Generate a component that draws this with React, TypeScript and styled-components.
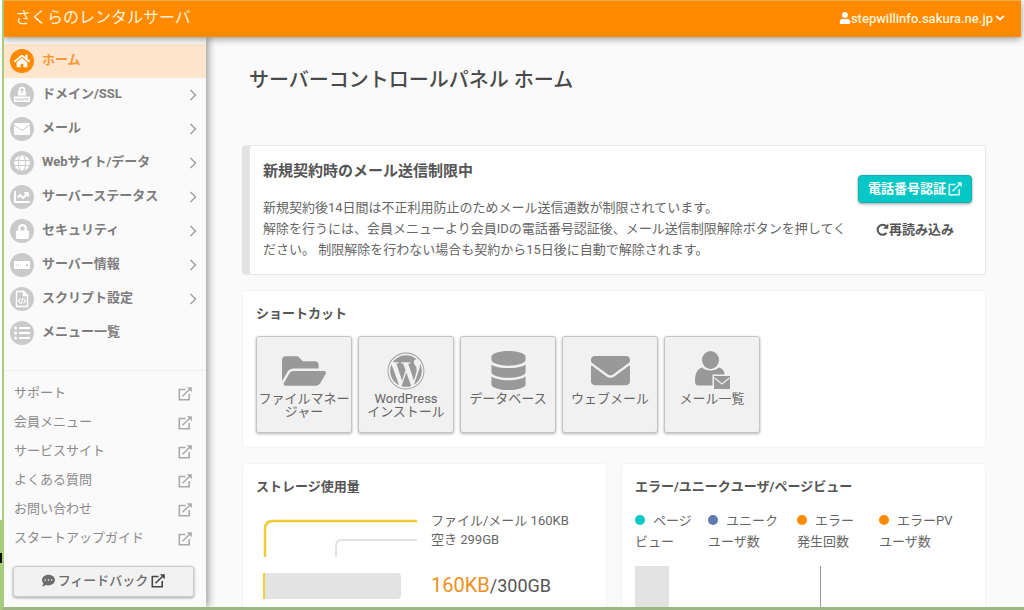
import React from 'react';
import styled, { createGlobalStyle } from 'styled-components';
import {
  FaChartLine, FaChevronDown, FaCommentDots, FaDatabase, FaEnvelope, FaFolderOpen,
  FaGlobe, FaHome, FaListUl, FaLock, FaUser, FaWordpress,
} from 'react-icons/fa';

const Global = createGlobalStyle`
  * { box-sizing: border-box; }
  body {
    margin: 0;
    background: linear-gradient(#fff 520px, #a5cd7c 520px 553px, #111 553px 563px, #a5cd7c 563px);
    color: #555;
    font: 13px/21px Roboto, "Noto Sans CJK JP", sans-serif;
  }
  h1, h2, p, ul { margin: 0; padding: 0; }
  ul { list-style: none; }
  a { color: inherit; text-decoration: none; }
  button { font: inherit; color: inherit; cursor: pointer; }
  svg { display: block; flex: none; }
`;

const Frame = styled.div`
  position: relative;
  height: 100vh;
  overflow: hidden;
  display: flex;
  flex-direction: column;
  background: #fafafa;
  border: solid #a5cd7c;
  border-width: 0 0 3px 2px;
  border-bottom-color: #9db683;
  margin-left: 2px;
`;

const Header = styled.header`
  position: relative;
  z-index: 2;
  flex: none;
  height: 37px;
  margin-right: 3px;
  padding: 0 16px 0 11px;
  border-top: 1px solid #f0a850;
  display: flex;
  align-items: center;
  justify-content: space-between;
  background: #ff8a00;
  color: #fff1d6;
  box-shadow: 0 2px 7px rgba(0, 0, 0, 0.4);
`;

const Brand = styled.a`
  font-size: 16px;
  line-height: 24px;
  padding-bottom: 2px;
`;

const Account = styled.button`
  display: flex;
  align-items: center;
  padding: 0 0 2px;
  border: 0;
  background: none;
  font-weight: 500;
  svg { fill: #fff; }
  svg:last-child { margin-left: 2px; }
`;

const Body = styled.div`
  flex: 1;
  min-height: 0;
  display: flex;
`;

const Sidebar = styled.aside`
  position: relative;
  z-index: 1;
  flex: none;
  width: 202px;
  padding-top: 7px;
  background: #fafafa;
  box-shadow: 2px 0 8px rgba(0, 0, 0, 0.42);
`;

const MenuItem = styled.a<{ $active?: boolean }>`
  display: flex;
  align-items: center;
  gap: 8px;
  height: 34px;
  padding: 0 9px 0 6px;
  font-weight: 700;
  color: ${p => (p.$active ? '#f5993a' : '#7c7c7c')};
  background: ${p => (p.$active ? '#ffe5cc' : 'transparent')};
`;

const MenuIcon = styled.span<{ $active?: boolean }>`
  flex: none;
  width: 24px;
  height: 24px;
  border-radius: 50%;
  display: grid;
  place-items: center;
  color: #fff;
  background: ${p => (p.$active ? '#ff8a00' : '#cacaca')};
`;

const MenuLabel = styled.span`
  flex: 1;
  padding-bottom: 3px;
`;

const LinkList = styled.ul`
  margin-top: 20px;
  padding: 8px 14px 0 10px;
  border-top: 1px solid #eee;
`;

const SideLink = styled.a`
  display: flex;
  align-items: center;
  justify-content: space-between;
  height: 29px;
  color: #8a8a8a;
  span { padding-bottom: 3px; }
  svg { color: #aaa; }
`;

const Feedback = styled.button`
  display: flex;
  align-items: center;
  justify-content: center;
  gap: 3px;
  width: 181px;
  height: 31px;
  margin: 13px 0 0 9px;
  padding: 0 0 2px;
  border: 1px solid #ccc;
  border-radius: 3px;
  background: #f2f2f2;
  box-shadow: 0 1px 3px rgba(0, 0, 0, 0.35);
  font-weight: 500;
  color: #6c6c6c;
  svg:last-child { color: #444; }
`;

const Main = styled.main`
  flex: 1;
  min-width: 0;
  padding: 28px 38px 0 36px;
  display: flex;
  flex-direction: column;
  gap: 15px;
`;

const Title = styled.h1`
  padding-left: 7px;
  margin-bottom: 34px;
  font-size: 20px;
  line-height: 31px;
  font-weight: 500;
  color: #4a4a4a;
`;

const Card = styled.section`
  padding: 13px 13px 14px;
  background: #fff;
  border: 1px solid #f3f3f3;
  border-radius: 4px;
`;

const CardTitle = styled.h2`
  font-size: 13px;
  line-height: 20px;
  font-weight: 700;
  color: #555;
`;

const Notice = styled(Card)`
  display: flex;
  align-items: center;
  gap: 6px;
  padding: 14px 13px;
  border-color: #e8e8e8;
  border-left: 8px solid #e3e3e3;
`;

const NoticeText = styled.div`
  flex: 1;
  min-width: 0;
  color: #666;
`;

const NoticeTitle = styled.h2`
  margin-bottom: 15px;
  font-size: 15px;
  line-height: 22px;
  font-weight: 700;
  color: #555;
`;

const NoticeActions = styled.div`
  flex: none;
  display: flex;
  flex-direction: column;
  align-items: center;
  gap: 16px;
  padding-bottom: 6px;
`;

const Primary = styled.a`
  display: flex;
  align-items: center;
  gap: 2px;
  height: 28px;
  padding: 0 9px;
  border: 1px solid #0ab2b2;
  border-radius: 4px;
  background: #05c7c5;
  box-shadow: 0 1px 3px rgba(0, 0, 0, 0.4);
  color: #fff;
  font-weight: 700;
  svg { color: #d9ffff; }
`;

const Reload = styled.button`
  display: flex;
  align-items: center;
  padding: 0;
  border: 0;
  background: none;
  font-weight: 700;
`;

const Tiles = styled.div`
  display: flex;
  gap: 6px;
  margin-top: 12px;
`;

const Tile = styled.a`
  display: flex;
  flex-direction: column;
  align-items: center;
  width: 96px;
  height: 97px;
  padding-top: 12px;
  border: 1px solid #c4c4c4;
  border-radius: 3px;
  background: #f1f1f1;
  box-shadow: 0 1px 3px rgba(0, 0, 0, 0.3);
  color: #666;
  line-height: 13px;
  text-align: center;
`;

const TileIcon = styled.span`
  display: grid;
  place-items: center;
  height: 43px;
  color: #999;
`;

const TileLabel = styled.span`
  display: flex;
  flex-direction: column;
  align-items: center;
`;

const Columns = styled.div`
  display: grid;
  grid-template-columns: 1fr 1fr;
  gap: 14px;
`;

const Storage = styled.div`
  display: grid;
  grid-template-columns: 161px 1fr;
  column-gap: 14px;
  row-gap: 15px;
  align-items: center;
  margin-top: 12px;
  padding-bottom: 30px;
`;

const StorageLegend = styled.p`
  align-self: start;
  padding-top: 2px;
  line-height: 19px;
  color: #666;
`;

const Meter = styled.div`
  width: 138px;
  height: 26px;
  margin-left: 7px;
  border-left: 2px solid #f0cf3c;
  border-radius: 0 4px 4px 0;
  background: #e3e3e3;
`;

const Amount = styled.p`
  font-size: 18px;
  line-height: 26px;
  strong {
    font-size: 20px;
    font-weight: 400;
    color: #f09022;
  }
`;

const Legend = styled.ul`
  display: flex;
  margin-top: 13px;
  color: #666;
`;

const LegendItem = styled.li<{ $color: string; $width: number }>`
  width: ${p => p.$width}px;
  &::before {
    content: '';
    display: inline-block;
    width: 10px;
    height: 10px;
    margin-right: 8px;
    border-radius: 50%;
    background: ${p => p.$color};
  }
`;

const Chart = styled.svg`
  width: 100%;
  height: 60px;
  margin-top: 14px;
`;

const External = () => (
  <svg width="14" height="14" viewBox="0 0 14 14" fill="none" stroke="currentColor" strokeWidth="1.6">
    <path d="M7.5 2.5H1.3v10.200h9.900V7M4.500 9.300 12 2" />
    <path d="M8.800.3h5v5z" fill="currentColor" stroke="none" />
  </svg>
);

const Chevron = () => (
  <svg width="8" height="12" viewBox="0 0 8 12" fill="none" stroke="#a2a2a2" strokeWidth="1.500">
    <path d="M1.500 1 6.500 6l-5 5" />
  </svg>
);

const ReloadIcon = () => (
  <svg width="13" height="13" viewBox="0 0 13 13" fill="none" stroke="currentColor" strokeWidth="2">
    <path d="M10.300 3.300A5 5 0 1 0 10.500 10" />
    <path d="M12.300.6v5.200H7.100z" fill="currentColor" stroke="none" />
  </svg>
);

const DomainIcon = () => (
  <svg width="18" height="18" viewBox="0 0 18 18">
    <path d="M6.500 6V4a2.500 2.500 0 0 1 5 0v2" fill="none" stroke="#fff" strokeWidth="1.500" />
    <path d="M5 4.800h8v4.700H5zM1 10.500h16V16H1z" fill="#fff" />
    <circle cx="9" cy="6" r="1" fill="#cacaca" />
    <path d="M2.500 12l1 2.500 1-2 1 2 1-2.500M7 12l1 2.500 1-2 1 2 1-2.500M11.500 12l1 2.500 1-2 1 2 1-2.500" fill="none" stroke="#cacaca" strokeWidth=".8" />
  </svg>
);

const MailIcon = () => (
  <svg width="18" height="14" viewBox="0 0 18 14">
    <rect x="1" y="1" width="16" height="12" rx="1.500" fill="#fff" />
    <path d="M1 3l8 5.500L17 3" fill="none" stroke="#cacaca" />
  </svg>
);

const ServerIcon = () => (
  <svg width="18" height="10" viewBox="0 0 18 10">
    <rect x="1" y="1" width="16" height="8" fill="#fff" />
    <path d="M3.500 4v2M5.500 4v2M7.500 4v2" stroke="#e4e4e4" />
    <circle cx="14" cy="5" r=".9" fill="#bbb" />
  </svg>
);

const ScriptIcon = () => (
  <svg width="14" height="18" viewBox="0 0 14 18" fill="none" stroke="#fff" strokeWidth="1.400">
    <path d="M1.500 1.500h7l4 4v11h-11z" />
    <path d="M8.500 1.500v4h4z" fill="#fff" />
    <path d="M5.500 8.500 3.500 11l2 2.500M8.500 8.500l2 2.500-2 2.500M7.600 8 6.400 14" strokeWidth="1.200" />
  </svg>
);

const UserMailIcon = () => (
  <svg width="37" height="39" viewBox="0 0 37 39" fill="#999">
    <ellipse cx="16.500" cy="9" rx="8.500" ry="9" />
    <path d="M8 16.500c4 4 13 4 17 0 3.500 1 5.300 3.500 5.700 7H18.500v11H4.500C2 34.500 1 33 1 30c0-7 2-12 7-13.500z" />
    <rect x="20" y="25" width="16" height="13" />
    <path d="M20.500 27 28 33l7.500-6" fill="none" stroke="#f1f1f1" strokeWidth="1.200" />
  </svg>
);

const menu = [
  { label: 'ホーム', icon: <FaHome size={16} />, active: true },
  { label: 'ドメイン/SSL', icon: <DomainIcon />, sub: true },
  { label: 'メール', icon: <MailIcon />, sub: true },
  { label: 'Webサイト/データ', icon: <FaGlobe size={16} />, sub: true },
  { label: 'サーバーステータス', icon: <FaChartLine size={16} />, sub: true },
  { label: 'セキュリティ', icon: <FaLock size={15} />, sub: true },
  { label: 'サーバー情報', icon: <ServerIcon />, sub: true },
  { label: 'スクリプト設定', icon: <ScriptIcon />, sub: true },
  { label: 'メニュー一覧', icon: <FaListUl size={16} /> },
];

const links = ['サポート', '会員メニュー', 'サービスサイト', 'よくある質問', 'お問い合わせ', 'スタートアップガイド'];

const shortcuts = [
  { lines: ['ファイルマネー', 'ジャー'], icon: <FaFolderOpen size={44} /> },
  { lines: ['WordPress', 'インストール'], icon: <FaWordpress size={38} /> },
  { lines: ['データベース'], icon: <FaDatabase size={39} /> },
  { lines: ['ウェブメール'], icon: <FaEnvelope size={39} /> },
  { lines: ['メール一覧'], icon: <UserMailIcon /> },
];

export default function App() {
  return (
    <>
      <Global />
      <Frame>
        <Header>
          <Brand href="#">さくらのレンタルサーバ</Brand>
          <Account>
            <FaUser size={12} />
            stepwillinfo.sakura.ne.jp
            <FaChevronDown size={10} />
          </Account>
        </Header>
        <Body>
          <Sidebar>
            <nav>
              {menu.map(m => (
                <MenuItem key={m.label} href="#" $active={m.active}>
                  <MenuIcon $active={m.active}>{m.icon}</MenuIcon>
                  <MenuLabel>{m.label}</MenuLabel>
                  {m.sub && <Chevron />}
                </MenuItem>
              ))}
            </nav>
            <LinkList>
              {links.map(l => (
                <li key={l}>
                  <SideLink href="#"><span>{l}</span><External /></SideLink>
                </li>
              ))}
            </LinkList>
            <Feedback>
              <FaCommentDots size={13} />
              フィードバック
              <External />
            </Feedback>
          </Sidebar>
          <Main>
            <Title>サーバーコントロールパネル ホーム</Title>
            <Notice>
              <NoticeText>
                <NoticeTitle>新規契約時のメール送信制限中</NoticeTitle>
                <p>新規契約後14日間は不正利用防止のためメール送信通数が制限されています。</p>
                <p>解除を行うには、会員メニューより会員IDの電話番号認証後、メール送信制限解除ボタンを押してください。 制限解除を行わない場合も契約から15日後に自動で解除されます。</p>
              </NoticeText>
              <NoticeActions>
                <Primary href="#">電話番号認証<External /></Primary>
                <Reload><ReloadIcon />再読み込み</Reload>
              </NoticeActions>
            </Notice>
            <Card>
              <CardTitle>ショートカット</CardTitle>
              <Tiles>
                {shortcuts.map(s => (
                  <Tile key={s.lines[0]} href="#">
                    <TileIcon>{s.icon}</TileIcon>
                    <TileLabel>{s.lines.map(t => <span key={t}>{t}</span>)}</TileLabel>
                  </Tile>
                ))}
              </Tiles>
            </Card>
            <Columns>
              <Card>
                <CardTitle>ストレージ使用量</CardTitle>
                <Storage>
                  <svg width="161" height="48" viewBox="0 0 161 48" fill="none">
                    <path d="M9 48V20q0-8 8-8h144" stroke="#f0cb34" strokeWidth="2.500" />
                    <path d="M80 48V37q0-6 6-6h75" stroke="#e3e3e3" strokeWidth="2" />
                  </svg>
                  <StorageLegend>ファイル/メール 160KB<br />空き 299GB</StorageLegend>
                  <Meter />
                  <Amount><strong>160KB</strong>/300GB</Amount>
                </Storage>
              </Card>
              <Card>
                <CardTitle>エラー/ユニークユーザ/ページビュー</CardTitle>
                <Legend>
                  <LegendItem $color="#05c7c5" $width={73}>ページ<br />ビュー</LegendItem>
                  <LegendItem $color="#607bb0" $width={89}>ユニーク<br />ユーザ数</LegendItem>
                  <LegendItem $color="#ff8a00" $width={82}>エラー<br />発生回数</LegendItem>
                  <LegendItem $color="#ff8a00" $width={82}>エラーPV<br />ユーザ数</LegendItem>
                </Legend>
                <Chart>
                  <rect width="34" height="60" fill="#e3e3e3" />
                  <rect x="185" width="1" height="60" fill="#999" />
                </Chart>
              </Card>
            </Columns>
          </Main>
        </Body>
      </Frame>
    </>
  );
}
